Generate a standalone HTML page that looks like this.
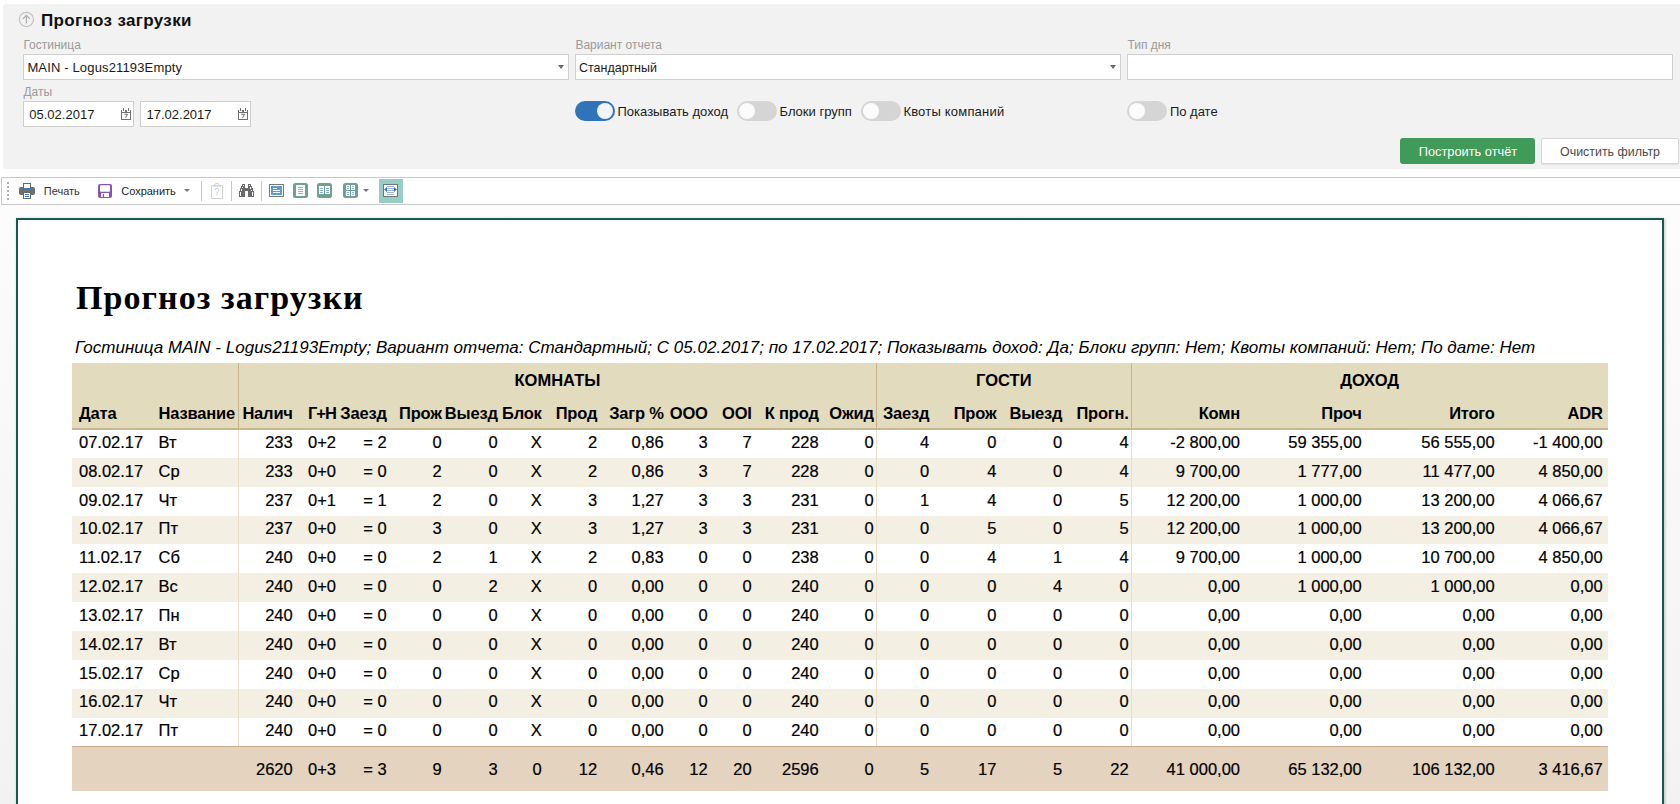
<!DOCTYPE html>
<html><head><meta charset="utf-8"><title>Прогноз загрузки</title>
<style>
html,body{margin:0;padding:0;}
body{width:1680px;height:804px;overflow:hidden;position:relative;background:#fff;font-family:"Liberation Sans",sans-serif;color:#000;}
.t{position:absolute;line-height:1;white-space:nowrap;}
.s{-webkit-text-stroke:0.2px #000;}
</style></head><body>
<div style="position:absolute;left:3px;top:4px;width:1677px;height:165px;background:#f2f2f2;border-radius:3px 0 0 3px;"></div>
<svg style="position:absolute;left:18px;top:11px" width="17" height="17" viewBox="0 0 17 17"><circle cx="8.4" cy="8.4" r="7.1" fill="none" stroke="#c2c2c2" stroke-width="1.25"/><path d="M8.4 12.6V4.4M4.9 7.9L8.4 4.4L11.9 7.9" fill="none" stroke="#b0b0b0" stroke-width="1.25"/></svg>
<div class="t" style="top:11.51px;font-size:17px;font-weight:700;color:#111;letter-spacing:0.35px;left:41.00px;">Прогноз загрузки</div>
<div class="t" style="top:38.74px;font-size:12px;color:#9a9a9a;left:23.40px;">Гостиница</div>
<div class="t" style="top:38.74px;font-size:12px;color:#9a9a9a;left:575.40px;">Вариант отчета</div>
<div class="t" style="top:38.74px;font-size:12px;color:#9a9a9a;left:1127.40px;">Тип дня</div>
<div class="t" style="top:85.84px;font-size:12px;color:#9a9a9a;left:23.40px;">Даты</div>
<div style="position:absolute;left:23px;top:54px;width:546px;height:26px;background:#fff;border:1px solid #cfcfcf;box-sizing:border-box;"></div>
<div style="position:absolute;left:575px;top:54px;width:546px;height:26px;background:#fff;border:1px solid #cfcfcf;box-sizing:border-box;"></div>
<div style="position:absolute;left:1127px;top:54px;width:546px;height:26px;background:#fff;border:1px solid #cfcfcf;box-sizing:border-box;"></div>
<div style="position:absolute;left:558px;top:65px;width:0;height:0;border-left:3px solid transparent;border-right:3px solid transparent;border-top:4px solid #6a6a6a"></div>
<div style="position:absolute;left:1110px;top:65px;width:0;height:0;border-left:3px solid transparent;border-right:3px solid transparent;border-top:4px solid #6a6a6a"></div>
<div class="t" style="top:60.70px;font-size:13px;color:#1a1a1a;letter-spacing:0.15px;left:27.40px;">MAIN - Logus21193Empty</div>
<div class="t" style="top:60.70px;font-size:13px;color:#1a1a1a;left:579.40px;transform:scaleX(0.96);transform-origin:0 0;">Стандартный</div>
<div style="position:absolute;left:23px;top:101px;width:111px;height:26px;background:#fff;border:1px solid #cfcfcf;box-sizing:border-box;"></div>
<div style="position:absolute;left:140px;top:101px;width:111px;height:26px;background:#fff;border:1px solid #cfcfcf;box-sizing:border-box;"></div>
<div class="t" style="top:108.00px;font-size:13px;color:#1a1a1a;left:29.30px;">05.02.2017</div>
<div class="t" style="top:108.00px;font-size:13px;color:#1a1a1a;left:146.50px;">17.02.2017</div>
<svg style="position:absolute;left:121px;top:108px" width="10" height="12" viewBox="0 0 10 12" shape-rendering="crispEdges"><g fill="#707070"><rect x="0" y="2" width="1" height="10"/><rect x="9" y="2" width="1" height="10"/><rect x="0" y="4" width="10" height="1"/><rect x="0" y="11" width="10" height="1"/><rect x="2" y="0" width="1" height="3"/><rect x="7" y="0" width="1" height="3"/><rect x="4" y="2" width="2" height="2"/></g><path d="M3.3 6.3h3.2l-2 3.6" fill="none" stroke="#707070" stroke-width="1" shape-rendering="geometricPrecision"/></svg>
<svg style="position:absolute;left:238px;top:108px" width="10" height="12" viewBox="0 0 10 12" shape-rendering="crispEdges"><g fill="#707070"><rect x="0" y="2" width="1" height="10"/><rect x="9" y="2" width="1" height="10"/><rect x="0" y="4" width="10" height="1"/><rect x="0" y="11" width="10" height="1"/><rect x="2" y="0" width="1" height="3"/><rect x="7" y="0" width="1" height="3"/><rect x="4" y="2" width="2" height="2"/></g><path d="M3.3 6.3h3.2l-2 3.6" fill="none" stroke="#707070" stroke-width="1" shape-rendering="geometricPrecision"/></svg>
<div style="position:absolute;left:575px;top:101px;width:40px;height:20px;background:#2f74b8;border-radius:10px;"></div>
<div style="position:absolute;left:597px;top:103px;width:16px;height:16px;background:#f1f5fa;border-radius:50%;"></div>
<div class="t" style="top:104.70px;font-size:13px;color:#1a1a1a;left:617.50px;">Показывать доход</div>
<div style="position:absolute;left:737px;top:101px;width:40px;height:20px;background:#d5d5d5;border-radius:10px;"></div>
<div style="position:absolute;left:739px;top:103px;width:16px;height:16px;background:#fbfbfb;border-radius:50%;"></div>
<div class="t" style="top:104.70px;font-size:13px;color:#1a1a1a;left:779.50px;">Блоки групп</div>
<div style="position:absolute;left:861px;top:101px;width:40px;height:20px;background:#d5d5d5;border-radius:10px;"></div>
<div style="position:absolute;left:863px;top:103px;width:16px;height:16px;background:#fbfbfb;border-radius:50%;"></div>
<div class="t" style="top:104.70px;font-size:13px;color:#1a1a1a;letter-spacing:0.2px;left:903.40px;">Квоты компаний</div>
<div style="position:absolute;left:1127px;top:101px;width:40px;height:20px;background:#d5d5d5;border-radius:10px;"></div>
<div style="position:absolute;left:1129px;top:103px;width:16px;height:16px;background:#fbfbfb;border-radius:50%;"></div>
<div class="t" style="top:104.70px;font-size:13px;color:#1a1a1a;left:1169.90px;">По дате</div>
<div style="position:absolute;left:1400px;top:138px;width:135px;height:26px;background:#409b58;border-radius:3px;"></div>
<div class="t" style="top:144.90px;font-size:13px;color:#fff;left:1167.70px;width:600px;text-align:center;transform:scaleX(0.985);">Построить отчёт</div>
<div style="position:absolute;left:1541px;top:138px;width:138px;height:26px;background:#fff;border:1px solid #d6d6d6;box-sizing:border-box;border-radius:2px;box-shadow:0 1px 1px rgba(0,0,0,0.08);"></div>
<div class="t" style="top:145.00px;font-size:13px;color:#4a4a4a;left:1310.40px;width:600px;text-align:center;transform:scaleX(0.955);">Очистить фильтр</div>
<div style="position:absolute;left:0px;top:205px;width:1680px;height:599px;background:linear-gradient(to bottom,#fcfcfc 0px,#f7f7f7 300px,#f2f2f2 599px);"></div>
<div style="position:absolute;left:1px;top:177px;width:1679px;height:28px;background:#fff;border-top:1px solid #c8c8c8;border-bottom:1px solid #c8c8c8;border-left:1px solid #c8c8c8;box-sizing:border-box;"></div>
<div style="position:absolute;left:7px;top:182px;width:2px;height:2px;background:#b0b0b0;"></div>
<div style="position:absolute;left:7px;top:186px;width:2px;height:2px;background:#b0b0b0;"></div>
<div style="position:absolute;left:7px;top:190px;width:2px;height:2px;background:#b0b0b0;"></div>
<div style="position:absolute;left:7px;top:194px;width:2px;height:2px;background:#b0b0b0;"></div>
<div style="position:absolute;left:7px;top:198px;width:2px;height:2px;background:#b0b0b0;"></div>
<svg style="position:absolute;left:19px;top:183px" width="16" height="16" viewBox="0 0 16 16"><rect x="4.5" y="0.5" width="7" height="5" fill="#fff" stroke="#666" stroke-width="1"/><path d="M2 4h2v2h8v-2h2a2 2 0 0 1 2 2v4a2 2 0 0 1-2 2h-12a2 2 0 0 1-2-2v-4a2 2 0 0 1 2-2z" fill="#6e6e6e"/><rect x="4" y="5" width="8" height="1" fill="#3b78c0"/><rect x="4.5" y="9.5" width="7" height="6" fill="#fff" stroke="#666" stroke-width="1"/><rect x="6" y="11" width="4" height="1" fill="#3b78c0"/><rect x="6" y="13" width="4" height="1" fill="#3b78c0"/></svg>
<div class="t" style="top:186.19px;font-size:11px;color:#333;left:43.80px;">Печать</div>
<svg style="position:absolute;left:98px;top:184px" width="14" height="14" viewBox="0 0 14 14"><rect x="0" y="0" width="14" height="14" rx="2" fill="#8a52b3"/><rect x="2" y="1.2" width="10" height="6.6" rx="0.8" fill="#fff"/><rect x="3" y="9" width="8" height="4" rx="0.5" fill="#fff"/><rect x="4.8" y="10" width="1.3" height="3" fill="#8a52b3"/></svg>
<div class="t" style="top:185.99px;font-size:11px;color:#222;left:121.20px;">Сохранить</div>
<div style="position:absolute;left:184px;top:189px;width:0;height:0;border-left:3px solid transparent;border-right:3px solid transparent;border-top:3px solid #777"></div>
<div style="position:absolute;left:201px;top:181px;width:1px;height:20px;background:#c8c8c8;"></div>
<div style="position:absolute;left:231px;top:181px;width:1px;height:20px;background:#c8c8c8;"></div>
<div style="position:absolute;left:261px;top:181px;width:1px;height:20px;background:#c8c8c8;"></div>
<svg style="position:absolute;left:211px;top:183px" width="12" height="16" viewBox="0 0 12 16"><rect x="0.5" y="2.5" width="11" height="13" fill="#fff" stroke="#d2d2d2" stroke-width="1"/><rect x="2" y="2.6" width="8" height="1" fill="#d2d2d2"/><rect x="4" y="0.5" width="4" height="2" rx="1" fill="none" stroke="#d2d2d2" stroke-width="1"/><path d="M4.2 7.2a1.8 1.8 0 1 1 2.6 1.6c-0.8 0.5-0.9 1-0.9 1.7" fill="none" stroke="#aac3e3" stroke-width="0.9"/><rect x="5.2" y="11.5" width="1.2" height="0.8" fill="#aac3e3"/></svg>
<svg style="position:absolute;left:239px;top:184px" width="15" height="13" viewBox="0 0 15 13" shape-rendering="crispEdges"><g fill="#6a6a6a"><rect x="3" y="0" width="3" height="2"/><rect x="2" y="2" width="4" height="2"/><rect x="1" y="4" width="5" height="3"/><rect x="0" y="7" width="6" height="6"/><rect x="9" y="0" width="3" height="2"/><rect x="9" y="2" width="4" height="2"/><rect x="9" y="4" width="5" height="3"/><rect x="9" y="7" width="6" height="6"/><rect x="6" y="4" width="3" height="3"/></g><g fill="#fff"><rect x="4" y="1" width="1" height="1"/><rect x="3" y="3" width="1" height="1"/><rect x="2" y="5" width="1" height="2"/><rect x="1" y="8" width="1" height="4"/><rect x="10" y="1" width="1" height="1"/><rect x="11" y="3" width="1" height="2"/><rect x="12" y="6" width="1" height="1"/><rect x="13" y="8" width="1" height="4"/></g></svg>
<svg style="position:absolute;left:269px;top:184px" width="15" height="13" viewBox="0 0 15 13" shape-rendering="crispEdges"><rect x="0" y="0" width="15" height="13" fill="#777"/><rect x="1" y="1" width="13" height="11" fill="#fff"/><rect x="2" y="2" width="11" height="9" fill="#5b9bd9"/><g fill="#fff"><rect x="4" y="4" width="4" height="1"/><rect x="4" y="6" width="7" height="1"/><rect x="4" y="8" width="7" height="1"/></g></svg>
<svg style="position:absolute;left:293px;top:183px" width="15" height="15" viewBox="0 0 15 15"><rect x="0" y="0" width="15" height="15" rx="2.5" fill="#6da38c"/><g shape-rendering="crispEdges"><rect x="3" y="2" width="9" height="11" fill="#fff"/><g fill="#8eaed6"><rect x="5" y="4" width="5" height="1"/><rect x="5" y="6" width="5" height="1"/><rect x="5" y="8" width="5" height="1"/><rect x="5" y="10" width="5" height="1"/></g></g></svg>
<svg style="position:absolute;left:317px;top:183px" width="15" height="15" viewBox="0 0 15 15"><rect x="0" y="0" width="15" height="15" rx="2.5" fill="#6da38c"/><g shape-rendering="crispEdges"><rect x="2" y="3" width="5" height="8" fill="#fff"/><rect x="8" y="3" width="5" height="8" fill="#fff"/><g fill="#8eaed6"><rect x="3" y="5" width="3" height="1"/><rect x="3" y="7" width="3" height="1"/><rect x="3" y="9" width="3" height="1"/><rect x="9" y="5" width="3" height="1"/><rect x="9" y="7" width="3" height="1"/><rect x="9" y="9" width="3" height="1"/></g></g></svg>
<svg style="position:absolute;left:343px;top:183px" width="15" height="15" viewBox="0 0 15 15"><rect x="0" y="0" width="15" height="15" rx="2.5" fill="#6da38c"/><g shape-rendering="crispEdges"><g fill="#fff"><rect x="3" y="2" width="4" height="5"/><rect x="8" y="2" width="4" height="5"/><rect x="3" y="8" width="4" height="5"/><rect x="8" y="8" width="4" height="5"/></g><g fill="#8eaed6"><rect x="4" y="3" width="2" height="1"/><rect x="4" y="5" width="2" height="1"/><rect x="9" y="3" width="2" height="1"/><rect x="9" y="5" width="2" height="1"/><rect x="4" y="9" width="2" height="1"/><rect x="4" y="11" width="2" height="1"/><rect x="9" y="9" width="2" height="1"/><rect x="9" y="11" width="2" height="1"/></g></g></svg>
<div style="position:absolute;left:363px;top:189px;width:0;height:0;border-left:3px solid transparent;border-right:3px solid transparent;border-top:3px solid #777"></div>
<div style="position:absolute;left:379px;top:179px;width:24px;height:24px;background:#97cdc3;"></div>
<svg style="position:absolute;left:383px;top:184px" width="15" height="13" viewBox="0 0 15 13"><g shape-rendering="crispEdges"><rect x="0" y="0" width="15" height="13" fill="#747474"/><rect x="1" y="1" width="13" height="11" fill="#fff"/><g fill="#98b5da"><rect x="4" y="2" width="7" height="1"/><rect x="4" y="4" width="7" height="1"/><rect x="3" y="6" width="9" height="1"/><rect x="4" y="8" width="7" height="1"/><rect x="4" y="10" width="7" height="1"/></g></g><path d="M1 5.5L4 3V8z M14 5.5L11 3V8z" fill="#3c78c0"/></svg>
<div style="position:absolute;left:16px;top:218px;width:1648px;height:620px;background:#fff;border:2px solid #135b4f;box-sizing:border-box;box-shadow:0 0 3px rgba(0,0,0,0.12),2px 1px 2px rgba(0,0,0,0.10);"></div>
<div class="t" style="font-family:'Liberation Serif',serif;top:280.82px;left:76px;font-size:34px;font-weight:700;color:#000;letter-spacing:1.05px">Прогноз загрузки</div>
<div class="t" style="top:339.01px;font-size:17px;font-style:italic;letter-spacing:0.02px;left:75.00px;">Гостиница MAIN - Logus21193Empty; Вариант отчета: Стандартный; С 05.02.2017; по 17.02.2017; Показывать доход: Да; Блоки групп: Нет; Квоты компаний: Нет; По дате: Нет</div>
<div style="position:absolute;left:72px;top:363px;width:1536px;height:66px;background:#e3dbbd;"></div>
<div style="position:absolute;left:72px;top:428.2px;width:1536px;height:1.5px;background:#c9b68c;"></div>
<div style="position:absolute;left:72px;top:457.87px;width:1536px;height:28.87px;background:#f3efe2"></div>
<div style="position:absolute;left:72px;top:515.61px;width:1536px;height:28.87px;background:#f3efe2"></div>
<div style="position:absolute;left:72px;top:573.35px;width:1536px;height:28.87px;background:#f3efe2"></div>
<div style="position:absolute;left:72px;top:631.09px;width:1536px;height:28.87px;background:#f3efe2"></div>
<div style="position:absolute;left:72px;top:688.83px;width:1536px;height:28.87px;background:#f3efe2"></div>
<div style="position:absolute;left:72px;top:745.5px;width:1536px;height:45.5px;background:#e3d3bf;border-top:1.5px solid #c9a987;box-sizing:border-box"></div>
<div style="position:absolute;left:237.90px;top:363px;width:1.3px;height:66px;background:#c7b38b"></div>
<div style="position:absolute;left:237.90px;top:430px;width:1.3px;height:316.07px;background:#e7dfca"></div>
<div style="position:absolute;left:875.70px;top:363px;width:1.3px;height:66px;background:#c7b38b"></div>
<div style="position:absolute;left:875.70px;top:430px;width:1.3px;height:316.07px;background:#e7dfca"></div>
<div style="position:absolute;left:1130.60px;top:363px;width:1.3px;height:66px;background:#c7b38b"></div>
<div style="position:absolute;left:1130.60px;top:430px;width:1.3px;height:316.07px;background:#e7dfca"></div>
<div class="t" style="top:371.73px;font-size:16.5px;font-weight:700;left:257.50px;width:600px;text-align:center;">КОМНАТЫ</div>
<div class="t" style="top:371.73px;font-size:16.5px;font-weight:700;left:703.80px;width:600px;text-align:center;">ГОСТИ</div>
<div class="t" style="top:371.73px;font-size:16.5px;font-weight:700;left:1069.60px;width:600px;text-align:center;">ДОХОД</div>
<div class="t" style="top:404.93px;font-size:16.5px;font-weight:700;letter-spacing:-0.2px;left:79.00px;">Дата</div>
<div class="t" style="top:404.93px;font-size:16.5px;font-weight:700;letter-spacing:-0.2px;left:158.60px;">Название</div>
<div class="t" style="top:404.93px;font-size:16.5px;font-weight:700;letter-spacing:-0.2px;left:-107.30px;width:400px;text-align:right;">Налич</div>
<div class="t" style="top:404.93px;font-size:16.5px;font-weight:700;letter-spacing:-1.0px;left:308.00px;">Г+Н</div>
<div class="t" style="top:404.93px;font-size:16.5px;font-weight:700;letter-spacing:-0.2px;left:-13.30px;width:400px;text-align:right;">Заезд</div>
<div class="t" style="top:404.93px;font-size:16.5px;font-weight:700;letter-spacing:-0.2px;left:41.70px;width:400px;text-align:right;">Прож</div>
<div class="t" style="top:404.93px;font-size:16.5px;font-weight:700;letter-spacing:-0.2px;left:97.70px;width:400px;text-align:right;">Выезд</div>
<div class="t" style="top:404.93px;font-size:16.5px;font-weight:700;letter-spacing:-0.2px;left:141.70px;width:400px;text-align:right;">Блок</div>
<div class="t" style="top:404.93px;font-size:16.5px;font-weight:700;letter-spacing:-0.2px;left:197.20px;width:400px;text-align:right;">Прод</div>
<div class="t" style="top:404.93px;font-size:16.5px;font-weight:700;letter-spacing:-0.2px;left:263.70px;width:400px;text-align:right;">Загр %</div>
<div class="t" style="top:404.93px;font-size:16.5px;font-weight:700;letter-spacing:-0.2px;left:307.70px;width:400px;text-align:right;">ООО</div>
<div class="t" style="top:404.93px;font-size:16.5px;font-weight:700;letter-spacing:-0.2px;left:351.70px;width:400px;text-align:right;">OOI</div>
<div class="t" style="top:404.93px;font-size:16.5px;font-weight:700;letter-spacing:-0.2px;left:418.70px;width:400px;text-align:right;">К прод</div>
<div class="t" style="top:404.93px;font-size:16.5px;font-weight:700;letter-spacing:-0.2px;left:473.70px;width:400px;text-align:right;">Ожид</div>
<div class="t" style="top:404.93px;font-size:16.5px;font-weight:700;letter-spacing:-0.2px;left:529.30px;width:400px;text-align:right;">Заезд</div>
<div class="t" style="top:404.93px;font-size:16.5px;font-weight:700;letter-spacing:-0.2px;left:596.40px;width:400px;text-align:right;">Прож</div>
<div class="t" style="top:404.93px;font-size:16.5px;font-weight:700;letter-spacing:-0.2px;left:662.30px;width:400px;text-align:right;">Выезд</div>
<div class="t" style="top:404.93px;font-size:16.5px;font-weight:700;letter-spacing:-0.2px;left:728.70px;width:400px;text-align:right;">Прогн.</div>
<div class="t" style="top:404.93px;font-size:16.5px;font-weight:700;letter-spacing:-0.2px;left:840.00px;width:400px;text-align:right;">Комн</div>
<div class="t" style="top:404.93px;font-size:16.5px;font-weight:700;letter-spacing:-0.2px;left:961.70px;width:400px;text-align:right;">Проч</div>
<div class="t" style="top:404.93px;font-size:16.5px;font-weight:700;letter-spacing:-0.2px;left:1094.70px;width:400px;text-align:right;">Итого</div>
<div class="t" style="top:404.93px;font-size:16.5px;font-weight:700;letter-spacing:-0.2px;left:1202.70px;width:400px;text-align:right;">ADR</div>
<div class="t s" style="top:433.83px;font-size:16.5px;left:79.00px;">07.02.17</div>
<div class="t s" style="top:433.83px;font-size:16.5px;left:158.60px;">Вт</div>
<div class="t s" style="top:433.83px;font-size:16.5px;left:-107.30px;width:400px;text-align:right;">233</div>
<div class="t s" style="top:433.83px;font-size:16.5px;left:308.00px;">0+2</div>
<div class="t s" style="top:433.83px;font-size:16.5px;left:-13.30px;width:400px;text-align:right;">= 2</div>
<div class="t s" style="top:433.83px;font-size:16.5px;left:41.70px;width:400px;text-align:right;">0</div>
<div class="t s" style="top:433.83px;font-size:16.5px;left:97.70px;width:400px;text-align:right;">0</div>
<div class="t s" style="top:433.83px;font-size:16.5px;left:141.70px;width:400px;text-align:right;">X</div>
<div class="t s" style="top:433.83px;font-size:16.5px;left:197.20px;width:400px;text-align:right;">2</div>
<div class="t s" style="top:433.83px;font-size:16.5px;left:263.70px;width:400px;text-align:right;">0,86</div>
<div class="t s" style="top:433.83px;font-size:16.5px;left:307.70px;width:400px;text-align:right;">3</div>
<div class="t s" style="top:433.83px;font-size:16.5px;left:351.70px;width:400px;text-align:right;">7</div>
<div class="t s" style="top:433.83px;font-size:16.5px;left:418.70px;width:400px;text-align:right;">228</div>
<div class="t s" style="top:433.83px;font-size:16.5px;left:473.70px;width:400px;text-align:right;">0</div>
<div class="t s" style="top:433.83px;font-size:16.5px;left:529.30px;width:400px;text-align:right;">4</div>
<div class="t s" style="top:433.83px;font-size:16.5px;left:596.40px;width:400px;text-align:right;">0</div>
<div class="t s" style="top:433.83px;font-size:16.5px;left:662.30px;width:400px;text-align:right;">0</div>
<div class="t s" style="top:433.83px;font-size:16.5px;left:728.70px;width:400px;text-align:right;">4</div>
<div class="t s" style="top:433.83px;font-size:16.5px;left:840.00px;width:400px;text-align:right;">-2 800,00</div>
<div class="t s" style="top:433.83px;font-size:16.5px;left:961.70px;width:400px;text-align:right;">59 355,00</div>
<div class="t s" style="top:433.83px;font-size:16.5px;left:1094.70px;width:400px;text-align:right;">56 555,00</div>
<div class="t s" style="top:433.83px;font-size:16.5px;left:1202.70px;width:400px;text-align:right;">-1 400,00</div>
<div class="t s" style="top:462.68px;font-size:16.5px;left:79.00px;">08.02.17</div>
<div class="t s" style="top:462.68px;font-size:16.5px;left:158.60px;">Ср</div>
<div class="t s" style="top:462.68px;font-size:16.5px;left:-107.30px;width:400px;text-align:right;">233</div>
<div class="t s" style="top:462.68px;font-size:16.5px;left:308.00px;">0+0</div>
<div class="t s" style="top:462.68px;font-size:16.5px;left:-13.30px;width:400px;text-align:right;">= 0</div>
<div class="t s" style="top:462.68px;font-size:16.5px;left:41.70px;width:400px;text-align:right;">2</div>
<div class="t s" style="top:462.68px;font-size:16.5px;left:97.70px;width:400px;text-align:right;">0</div>
<div class="t s" style="top:462.68px;font-size:16.5px;left:141.70px;width:400px;text-align:right;">X</div>
<div class="t s" style="top:462.68px;font-size:16.5px;left:197.20px;width:400px;text-align:right;">2</div>
<div class="t s" style="top:462.68px;font-size:16.5px;left:263.70px;width:400px;text-align:right;">0,86</div>
<div class="t s" style="top:462.68px;font-size:16.5px;left:307.70px;width:400px;text-align:right;">3</div>
<div class="t s" style="top:462.68px;font-size:16.5px;left:351.70px;width:400px;text-align:right;">7</div>
<div class="t s" style="top:462.68px;font-size:16.5px;left:418.70px;width:400px;text-align:right;">228</div>
<div class="t s" style="top:462.68px;font-size:16.5px;left:473.70px;width:400px;text-align:right;">0</div>
<div class="t s" style="top:462.68px;font-size:16.5px;left:529.30px;width:400px;text-align:right;">0</div>
<div class="t s" style="top:462.68px;font-size:16.5px;left:596.40px;width:400px;text-align:right;">4</div>
<div class="t s" style="top:462.68px;font-size:16.5px;left:662.30px;width:400px;text-align:right;">0</div>
<div class="t s" style="top:462.68px;font-size:16.5px;left:728.70px;width:400px;text-align:right;">4</div>
<div class="t s" style="top:462.68px;font-size:16.5px;left:840.00px;width:400px;text-align:right;">9 700,00</div>
<div class="t s" style="top:462.68px;font-size:16.5px;left:961.70px;width:400px;text-align:right;">1 777,00</div>
<div class="t s" style="top:462.68px;font-size:16.5px;left:1094.70px;width:400px;text-align:right;">11 477,00</div>
<div class="t s" style="top:462.68px;font-size:16.5px;left:1202.70px;width:400px;text-align:right;">4 850,00</div>
<div class="t s" style="top:491.53px;font-size:16.5px;left:79.00px;">09.02.17</div>
<div class="t s" style="top:491.53px;font-size:16.5px;left:158.60px;">Чт</div>
<div class="t s" style="top:491.53px;font-size:16.5px;left:-107.30px;width:400px;text-align:right;">237</div>
<div class="t s" style="top:491.53px;font-size:16.5px;left:308.00px;">0+1</div>
<div class="t s" style="top:491.53px;font-size:16.5px;left:-13.30px;width:400px;text-align:right;">= 1</div>
<div class="t s" style="top:491.53px;font-size:16.5px;left:41.70px;width:400px;text-align:right;">2</div>
<div class="t s" style="top:491.53px;font-size:16.5px;left:97.70px;width:400px;text-align:right;">0</div>
<div class="t s" style="top:491.53px;font-size:16.5px;left:141.70px;width:400px;text-align:right;">X</div>
<div class="t s" style="top:491.53px;font-size:16.5px;left:197.20px;width:400px;text-align:right;">3</div>
<div class="t s" style="top:491.53px;font-size:16.5px;left:263.70px;width:400px;text-align:right;">1,27</div>
<div class="t s" style="top:491.53px;font-size:16.5px;left:307.70px;width:400px;text-align:right;">3</div>
<div class="t s" style="top:491.53px;font-size:16.5px;left:351.70px;width:400px;text-align:right;">3</div>
<div class="t s" style="top:491.53px;font-size:16.5px;left:418.70px;width:400px;text-align:right;">231</div>
<div class="t s" style="top:491.53px;font-size:16.5px;left:473.70px;width:400px;text-align:right;">0</div>
<div class="t s" style="top:491.53px;font-size:16.5px;left:529.30px;width:400px;text-align:right;">1</div>
<div class="t s" style="top:491.53px;font-size:16.5px;left:596.40px;width:400px;text-align:right;">4</div>
<div class="t s" style="top:491.53px;font-size:16.5px;left:662.30px;width:400px;text-align:right;">0</div>
<div class="t s" style="top:491.53px;font-size:16.5px;left:728.70px;width:400px;text-align:right;">5</div>
<div class="t s" style="top:491.53px;font-size:16.5px;left:840.00px;width:400px;text-align:right;">12 200,00</div>
<div class="t s" style="top:491.53px;font-size:16.5px;left:961.70px;width:400px;text-align:right;">1 000,00</div>
<div class="t s" style="top:491.53px;font-size:16.5px;left:1094.70px;width:400px;text-align:right;">13 200,00</div>
<div class="t s" style="top:491.53px;font-size:16.5px;left:1202.70px;width:400px;text-align:right;">4 066,67</div>
<div class="t s" style="top:520.38px;font-size:16.5px;left:79.00px;">10.02.17</div>
<div class="t s" style="top:520.38px;font-size:16.5px;left:158.60px;">Пт</div>
<div class="t s" style="top:520.38px;font-size:16.5px;left:-107.30px;width:400px;text-align:right;">237</div>
<div class="t s" style="top:520.38px;font-size:16.5px;left:308.00px;">0+0</div>
<div class="t s" style="top:520.38px;font-size:16.5px;left:-13.30px;width:400px;text-align:right;">= 0</div>
<div class="t s" style="top:520.38px;font-size:16.5px;left:41.70px;width:400px;text-align:right;">3</div>
<div class="t s" style="top:520.38px;font-size:16.5px;left:97.70px;width:400px;text-align:right;">0</div>
<div class="t s" style="top:520.38px;font-size:16.5px;left:141.70px;width:400px;text-align:right;">X</div>
<div class="t s" style="top:520.38px;font-size:16.5px;left:197.20px;width:400px;text-align:right;">3</div>
<div class="t s" style="top:520.38px;font-size:16.5px;left:263.70px;width:400px;text-align:right;">1,27</div>
<div class="t s" style="top:520.38px;font-size:16.5px;left:307.70px;width:400px;text-align:right;">3</div>
<div class="t s" style="top:520.38px;font-size:16.5px;left:351.70px;width:400px;text-align:right;">3</div>
<div class="t s" style="top:520.38px;font-size:16.5px;left:418.70px;width:400px;text-align:right;">231</div>
<div class="t s" style="top:520.38px;font-size:16.5px;left:473.70px;width:400px;text-align:right;">0</div>
<div class="t s" style="top:520.38px;font-size:16.5px;left:529.30px;width:400px;text-align:right;">0</div>
<div class="t s" style="top:520.38px;font-size:16.5px;left:596.40px;width:400px;text-align:right;">5</div>
<div class="t s" style="top:520.38px;font-size:16.5px;left:662.30px;width:400px;text-align:right;">0</div>
<div class="t s" style="top:520.38px;font-size:16.5px;left:728.70px;width:400px;text-align:right;">5</div>
<div class="t s" style="top:520.38px;font-size:16.5px;left:840.00px;width:400px;text-align:right;">12 200,00</div>
<div class="t s" style="top:520.38px;font-size:16.5px;left:961.70px;width:400px;text-align:right;">1 000,00</div>
<div class="t s" style="top:520.38px;font-size:16.5px;left:1094.70px;width:400px;text-align:right;">13 200,00</div>
<div class="t s" style="top:520.38px;font-size:16.5px;left:1202.70px;width:400px;text-align:right;">4 066,67</div>
<div class="t s" style="top:549.23px;font-size:16.5px;left:79.00px;">11.02.17</div>
<div class="t s" style="top:549.23px;font-size:16.5px;left:158.60px;">Сб</div>
<div class="t s" style="top:549.23px;font-size:16.5px;left:-107.30px;width:400px;text-align:right;">240</div>
<div class="t s" style="top:549.23px;font-size:16.5px;left:308.00px;">0+0</div>
<div class="t s" style="top:549.23px;font-size:16.5px;left:-13.30px;width:400px;text-align:right;">= 0</div>
<div class="t s" style="top:549.23px;font-size:16.5px;left:41.70px;width:400px;text-align:right;">2</div>
<div class="t s" style="top:549.23px;font-size:16.5px;left:97.70px;width:400px;text-align:right;">1</div>
<div class="t s" style="top:549.23px;font-size:16.5px;left:141.70px;width:400px;text-align:right;">X</div>
<div class="t s" style="top:549.23px;font-size:16.5px;left:197.20px;width:400px;text-align:right;">2</div>
<div class="t s" style="top:549.23px;font-size:16.5px;left:263.70px;width:400px;text-align:right;">0,83</div>
<div class="t s" style="top:549.23px;font-size:16.5px;left:307.70px;width:400px;text-align:right;">0</div>
<div class="t s" style="top:549.23px;font-size:16.5px;left:351.70px;width:400px;text-align:right;">0</div>
<div class="t s" style="top:549.23px;font-size:16.5px;left:418.70px;width:400px;text-align:right;">238</div>
<div class="t s" style="top:549.23px;font-size:16.5px;left:473.70px;width:400px;text-align:right;">0</div>
<div class="t s" style="top:549.23px;font-size:16.5px;left:529.30px;width:400px;text-align:right;">0</div>
<div class="t s" style="top:549.23px;font-size:16.5px;left:596.40px;width:400px;text-align:right;">4</div>
<div class="t s" style="top:549.23px;font-size:16.5px;left:662.30px;width:400px;text-align:right;">1</div>
<div class="t s" style="top:549.23px;font-size:16.5px;left:728.70px;width:400px;text-align:right;">4</div>
<div class="t s" style="top:549.23px;font-size:16.5px;left:840.00px;width:400px;text-align:right;">9 700,00</div>
<div class="t s" style="top:549.23px;font-size:16.5px;left:961.70px;width:400px;text-align:right;">1 000,00</div>
<div class="t s" style="top:549.23px;font-size:16.5px;left:1094.70px;width:400px;text-align:right;">10 700,00</div>
<div class="t s" style="top:549.23px;font-size:16.5px;left:1202.70px;width:400px;text-align:right;">4 850,00</div>
<div class="t s" style="top:578.08px;font-size:16.5px;left:79.00px;">12.02.17</div>
<div class="t s" style="top:578.08px;font-size:16.5px;left:158.60px;">Вс</div>
<div class="t s" style="top:578.08px;font-size:16.5px;left:-107.30px;width:400px;text-align:right;">240</div>
<div class="t s" style="top:578.08px;font-size:16.5px;left:308.00px;">0+0</div>
<div class="t s" style="top:578.08px;font-size:16.5px;left:-13.30px;width:400px;text-align:right;">= 0</div>
<div class="t s" style="top:578.08px;font-size:16.5px;left:41.70px;width:400px;text-align:right;">0</div>
<div class="t s" style="top:578.08px;font-size:16.5px;left:97.70px;width:400px;text-align:right;">2</div>
<div class="t s" style="top:578.08px;font-size:16.5px;left:141.70px;width:400px;text-align:right;">X</div>
<div class="t s" style="top:578.08px;font-size:16.5px;left:197.20px;width:400px;text-align:right;">0</div>
<div class="t s" style="top:578.08px;font-size:16.5px;left:263.70px;width:400px;text-align:right;">0,00</div>
<div class="t s" style="top:578.08px;font-size:16.5px;left:307.70px;width:400px;text-align:right;">0</div>
<div class="t s" style="top:578.08px;font-size:16.5px;left:351.70px;width:400px;text-align:right;">0</div>
<div class="t s" style="top:578.08px;font-size:16.5px;left:418.70px;width:400px;text-align:right;">240</div>
<div class="t s" style="top:578.08px;font-size:16.5px;left:473.70px;width:400px;text-align:right;">0</div>
<div class="t s" style="top:578.08px;font-size:16.5px;left:529.30px;width:400px;text-align:right;">0</div>
<div class="t s" style="top:578.08px;font-size:16.5px;left:596.40px;width:400px;text-align:right;">0</div>
<div class="t s" style="top:578.08px;font-size:16.5px;left:662.30px;width:400px;text-align:right;">4</div>
<div class="t s" style="top:578.08px;font-size:16.5px;left:728.70px;width:400px;text-align:right;">0</div>
<div class="t s" style="top:578.08px;font-size:16.5px;left:840.00px;width:400px;text-align:right;">0,00</div>
<div class="t s" style="top:578.08px;font-size:16.5px;left:961.70px;width:400px;text-align:right;">1 000,00</div>
<div class="t s" style="top:578.08px;font-size:16.5px;left:1094.70px;width:400px;text-align:right;">1 000,00</div>
<div class="t s" style="top:578.08px;font-size:16.5px;left:1202.70px;width:400px;text-align:right;">0,00</div>
<div class="t s" style="top:606.93px;font-size:16.5px;left:79.00px;">13.02.17</div>
<div class="t s" style="top:606.93px;font-size:16.5px;left:158.60px;">Пн</div>
<div class="t s" style="top:606.93px;font-size:16.5px;left:-107.30px;width:400px;text-align:right;">240</div>
<div class="t s" style="top:606.93px;font-size:16.5px;left:308.00px;">0+0</div>
<div class="t s" style="top:606.93px;font-size:16.5px;left:-13.30px;width:400px;text-align:right;">= 0</div>
<div class="t s" style="top:606.93px;font-size:16.5px;left:41.70px;width:400px;text-align:right;">0</div>
<div class="t s" style="top:606.93px;font-size:16.5px;left:97.70px;width:400px;text-align:right;">0</div>
<div class="t s" style="top:606.93px;font-size:16.5px;left:141.70px;width:400px;text-align:right;">X</div>
<div class="t s" style="top:606.93px;font-size:16.5px;left:197.20px;width:400px;text-align:right;">0</div>
<div class="t s" style="top:606.93px;font-size:16.5px;left:263.70px;width:400px;text-align:right;">0,00</div>
<div class="t s" style="top:606.93px;font-size:16.5px;left:307.70px;width:400px;text-align:right;">0</div>
<div class="t s" style="top:606.93px;font-size:16.5px;left:351.70px;width:400px;text-align:right;">0</div>
<div class="t s" style="top:606.93px;font-size:16.5px;left:418.70px;width:400px;text-align:right;">240</div>
<div class="t s" style="top:606.93px;font-size:16.5px;left:473.70px;width:400px;text-align:right;">0</div>
<div class="t s" style="top:606.93px;font-size:16.5px;left:529.30px;width:400px;text-align:right;">0</div>
<div class="t s" style="top:606.93px;font-size:16.5px;left:596.40px;width:400px;text-align:right;">0</div>
<div class="t s" style="top:606.93px;font-size:16.5px;left:662.30px;width:400px;text-align:right;">0</div>
<div class="t s" style="top:606.93px;font-size:16.5px;left:728.70px;width:400px;text-align:right;">0</div>
<div class="t s" style="top:606.93px;font-size:16.5px;left:840.00px;width:400px;text-align:right;">0,00</div>
<div class="t s" style="top:606.93px;font-size:16.5px;left:961.70px;width:400px;text-align:right;">0,00</div>
<div class="t s" style="top:606.93px;font-size:16.5px;left:1094.70px;width:400px;text-align:right;">0,00</div>
<div class="t s" style="top:606.93px;font-size:16.5px;left:1202.70px;width:400px;text-align:right;">0,00</div>
<div class="t s" style="top:635.78px;font-size:16.5px;left:79.00px;">14.02.17</div>
<div class="t s" style="top:635.78px;font-size:16.5px;left:158.60px;">Вт</div>
<div class="t s" style="top:635.78px;font-size:16.5px;left:-107.30px;width:400px;text-align:right;">240</div>
<div class="t s" style="top:635.78px;font-size:16.5px;left:308.00px;">0+0</div>
<div class="t s" style="top:635.78px;font-size:16.5px;left:-13.30px;width:400px;text-align:right;">= 0</div>
<div class="t s" style="top:635.78px;font-size:16.5px;left:41.70px;width:400px;text-align:right;">0</div>
<div class="t s" style="top:635.78px;font-size:16.5px;left:97.70px;width:400px;text-align:right;">0</div>
<div class="t s" style="top:635.78px;font-size:16.5px;left:141.70px;width:400px;text-align:right;">X</div>
<div class="t s" style="top:635.78px;font-size:16.5px;left:197.20px;width:400px;text-align:right;">0</div>
<div class="t s" style="top:635.78px;font-size:16.5px;left:263.70px;width:400px;text-align:right;">0,00</div>
<div class="t s" style="top:635.78px;font-size:16.5px;left:307.70px;width:400px;text-align:right;">0</div>
<div class="t s" style="top:635.78px;font-size:16.5px;left:351.70px;width:400px;text-align:right;">0</div>
<div class="t s" style="top:635.78px;font-size:16.5px;left:418.70px;width:400px;text-align:right;">240</div>
<div class="t s" style="top:635.78px;font-size:16.5px;left:473.70px;width:400px;text-align:right;">0</div>
<div class="t s" style="top:635.78px;font-size:16.5px;left:529.30px;width:400px;text-align:right;">0</div>
<div class="t s" style="top:635.78px;font-size:16.5px;left:596.40px;width:400px;text-align:right;">0</div>
<div class="t s" style="top:635.78px;font-size:16.5px;left:662.30px;width:400px;text-align:right;">0</div>
<div class="t s" style="top:635.78px;font-size:16.5px;left:728.70px;width:400px;text-align:right;">0</div>
<div class="t s" style="top:635.78px;font-size:16.5px;left:840.00px;width:400px;text-align:right;">0,00</div>
<div class="t s" style="top:635.78px;font-size:16.5px;left:961.70px;width:400px;text-align:right;">0,00</div>
<div class="t s" style="top:635.78px;font-size:16.5px;left:1094.70px;width:400px;text-align:right;">0,00</div>
<div class="t s" style="top:635.78px;font-size:16.5px;left:1202.70px;width:400px;text-align:right;">0,00</div>
<div class="t s" style="top:664.63px;font-size:16.5px;left:79.00px;">15.02.17</div>
<div class="t s" style="top:664.63px;font-size:16.5px;left:158.60px;">Ср</div>
<div class="t s" style="top:664.63px;font-size:16.5px;left:-107.30px;width:400px;text-align:right;">240</div>
<div class="t s" style="top:664.63px;font-size:16.5px;left:308.00px;">0+0</div>
<div class="t s" style="top:664.63px;font-size:16.5px;left:-13.30px;width:400px;text-align:right;">= 0</div>
<div class="t s" style="top:664.63px;font-size:16.5px;left:41.70px;width:400px;text-align:right;">0</div>
<div class="t s" style="top:664.63px;font-size:16.5px;left:97.70px;width:400px;text-align:right;">0</div>
<div class="t s" style="top:664.63px;font-size:16.5px;left:141.70px;width:400px;text-align:right;">X</div>
<div class="t s" style="top:664.63px;font-size:16.5px;left:197.20px;width:400px;text-align:right;">0</div>
<div class="t s" style="top:664.63px;font-size:16.5px;left:263.70px;width:400px;text-align:right;">0,00</div>
<div class="t s" style="top:664.63px;font-size:16.5px;left:307.70px;width:400px;text-align:right;">0</div>
<div class="t s" style="top:664.63px;font-size:16.5px;left:351.70px;width:400px;text-align:right;">0</div>
<div class="t s" style="top:664.63px;font-size:16.5px;left:418.70px;width:400px;text-align:right;">240</div>
<div class="t s" style="top:664.63px;font-size:16.5px;left:473.70px;width:400px;text-align:right;">0</div>
<div class="t s" style="top:664.63px;font-size:16.5px;left:529.30px;width:400px;text-align:right;">0</div>
<div class="t s" style="top:664.63px;font-size:16.5px;left:596.40px;width:400px;text-align:right;">0</div>
<div class="t s" style="top:664.63px;font-size:16.5px;left:662.30px;width:400px;text-align:right;">0</div>
<div class="t s" style="top:664.63px;font-size:16.5px;left:728.70px;width:400px;text-align:right;">0</div>
<div class="t s" style="top:664.63px;font-size:16.5px;left:840.00px;width:400px;text-align:right;">0,00</div>
<div class="t s" style="top:664.63px;font-size:16.5px;left:961.70px;width:400px;text-align:right;">0,00</div>
<div class="t s" style="top:664.63px;font-size:16.5px;left:1094.70px;width:400px;text-align:right;">0,00</div>
<div class="t s" style="top:664.63px;font-size:16.5px;left:1202.70px;width:400px;text-align:right;">0,00</div>
<div class="t s" style="top:693.48px;font-size:16.5px;left:79.00px;">16.02.17</div>
<div class="t s" style="top:693.48px;font-size:16.5px;left:158.60px;">Чт</div>
<div class="t s" style="top:693.48px;font-size:16.5px;left:-107.30px;width:400px;text-align:right;">240</div>
<div class="t s" style="top:693.48px;font-size:16.5px;left:308.00px;">0+0</div>
<div class="t s" style="top:693.48px;font-size:16.5px;left:-13.30px;width:400px;text-align:right;">= 0</div>
<div class="t s" style="top:693.48px;font-size:16.5px;left:41.70px;width:400px;text-align:right;">0</div>
<div class="t s" style="top:693.48px;font-size:16.5px;left:97.70px;width:400px;text-align:right;">0</div>
<div class="t s" style="top:693.48px;font-size:16.5px;left:141.70px;width:400px;text-align:right;">X</div>
<div class="t s" style="top:693.48px;font-size:16.5px;left:197.20px;width:400px;text-align:right;">0</div>
<div class="t s" style="top:693.48px;font-size:16.5px;left:263.70px;width:400px;text-align:right;">0,00</div>
<div class="t s" style="top:693.48px;font-size:16.5px;left:307.70px;width:400px;text-align:right;">0</div>
<div class="t s" style="top:693.48px;font-size:16.5px;left:351.70px;width:400px;text-align:right;">0</div>
<div class="t s" style="top:693.48px;font-size:16.5px;left:418.70px;width:400px;text-align:right;">240</div>
<div class="t s" style="top:693.48px;font-size:16.5px;left:473.70px;width:400px;text-align:right;">0</div>
<div class="t s" style="top:693.48px;font-size:16.5px;left:529.30px;width:400px;text-align:right;">0</div>
<div class="t s" style="top:693.48px;font-size:16.5px;left:596.40px;width:400px;text-align:right;">0</div>
<div class="t s" style="top:693.48px;font-size:16.5px;left:662.30px;width:400px;text-align:right;">0</div>
<div class="t s" style="top:693.48px;font-size:16.5px;left:728.70px;width:400px;text-align:right;">0</div>
<div class="t s" style="top:693.48px;font-size:16.5px;left:840.00px;width:400px;text-align:right;">0,00</div>
<div class="t s" style="top:693.48px;font-size:16.5px;left:961.70px;width:400px;text-align:right;">0,00</div>
<div class="t s" style="top:693.48px;font-size:16.5px;left:1094.70px;width:400px;text-align:right;">0,00</div>
<div class="t s" style="top:693.48px;font-size:16.5px;left:1202.70px;width:400px;text-align:right;">0,00</div>
<div class="t s" style="top:722.33px;font-size:16.5px;left:79.00px;">17.02.17</div>
<div class="t s" style="top:722.33px;font-size:16.5px;left:158.60px;">Пт</div>
<div class="t s" style="top:722.33px;font-size:16.5px;left:-107.30px;width:400px;text-align:right;">240</div>
<div class="t s" style="top:722.33px;font-size:16.5px;left:308.00px;">0+0</div>
<div class="t s" style="top:722.33px;font-size:16.5px;left:-13.30px;width:400px;text-align:right;">= 0</div>
<div class="t s" style="top:722.33px;font-size:16.5px;left:41.70px;width:400px;text-align:right;">0</div>
<div class="t s" style="top:722.33px;font-size:16.5px;left:97.70px;width:400px;text-align:right;">0</div>
<div class="t s" style="top:722.33px;font-size:16.5px;left:141.70px;width:400px;text-align:right;">X</div>
<div class="t s" style="top:722.33px;font-size:16.5px;left:197.20px;width:400px;text-align:right;">0</div>
<div class="t s" style="top:722.33px;font-size:16.5px;left:263.70px;width:400px;text-align:right;">0,00</div>
<div class="t s" style="top:722.33px;font-size:16.5px;left:307.70px;width:400px;text-align:right;">0</div>
<div class="t s" style="top:722.33px;font-size:16.5px;left:351.70px;width:400px;text-align:right;">0</div>
<div class="t s" style="top:722.33px;font-size:16.5px;left:418.70px;width:400px;text-align:right;">240</div>
<div class="t s" style="top:722.33px;font-size:16.5px;left:473.70px;width:400px;text-align:right;">0</div>
<div class="t s" style="top:722.33px;font-size:16.5px;left:529.30px;width:400px;text-align:right;">0</div>
<div class="t s" style="top:722.33px;font-size:16.5px;left:596.40px;width:400px;text-align:right;">0</div>
<div class="t s" style="top:722.33px;font-size:16.5px;left:662.30px;width:400px;text-align:right;">0</div>
<div class="t s" style="top:722.33px;font-size:16.5px;left:728.70px;width:400px;text-align:right;">0</div>
<div class="t s" style="top:722.33px;font-size:16.5px;left:840.00px;width:400px;text-align:right;">0,00</div>
<div class="t s" style="top:722.33px;font-size:16.5px;left:961.70px;width:400px;text-align:right;">0,00</div>
<div class="t s" style="top:722.33px;font-size:16.5px;left:1094.70px;width:400px;text-align:right;">0,00</div>
<div class="t s" style="top:722.33px;font-size:16.5px;left:1202.70px;width:400px;text-align:right;">0,00</div>
<div class="t s" style="top:760.83px;font-size:16.5px;left:-107.30px;width:400px;text-align:right;">2620</div>
<div class="t s" style="top:760.83px;font-size:16.5px;left:308.00px;">0+3</div>
<div class="t s" style="top:760.83px;font-size:16.5px;left:-13.30px;width:400px;text-align:right;">= 3</div>
<div class="t s" style="top:760.83px;font-size:16.5px;left:41.70px;width:400px;text-align:right;">9</div>
<div class="t s" style="top:760.83px;font-size:16.5px;left:97.70px;width:400px;text-align:right;">3</div>
<div class="t s" style="top:760.83px;font-size:16.5px;left:141.70px;width:400px;text-align:right;">0</div>
<div class="t s" style="top:760.83px;font-size:16.5px;left:197.20px;width:400px;text-align:right;">12</div>
<div class="t s" style="top:760.83px;font-size:16.5px;left:263.70px;width:400px;text-align:right;">0,46</div>
<div class="t s" style="top:760.83px;font-size:16.5px;left:307.70px;width:400px;text-align:right;">12</div>
<div class="t s" style="top:760.83px;font-size:16.5px;left:351.70px;width:400px;text-align:right;">20</div>
<div class="t s" style="top:760.83px;font-size:16.5px;left:418.70px;width:400px;text-align:right;">2596</div>
<div class="t s" style="top:760.83px;font-size:16.5px;left:473.70px;width:400px;text-align:right;">0</div>
<div class="t s" style="top:760.83px;font-size:16.5px;left:529.30px;width:400px;text-align:right;">5</div>
<div class="t s" style="top:760.83px;font-size:16.5px;left:596.40px;width:400px;text-align:right;">17</div>
<div class="t s" style="top:760.83px;font-size:16.5px;left:662.30px;width:400px;text-align:right;">5</div>
<div class="t s" style="top:760.83px;font-size:16.5px;left:728.70px;width:400px;text-align:right;">22</div>
<div class="t s" style="top:760.83px;font-size:16.5px;left:840.00px;width:400px;text-align:right;">41 000,00</div>
<div class="t s" style="top:760.83px;font-size:16.5px;left:961.70px;width:400px;text-align:right;">65 132,00</div>
<div class="t s" style="top:760.83px;font-size:16.5px;left:1094.70px;width:400px;text-align:right;">106 132,00</div>
<div class="t s" style="top:760.83px;font-size:16.5px;left:1202.70px;width:400px;text-align:right;">3 416,67</div>
</body></html>
